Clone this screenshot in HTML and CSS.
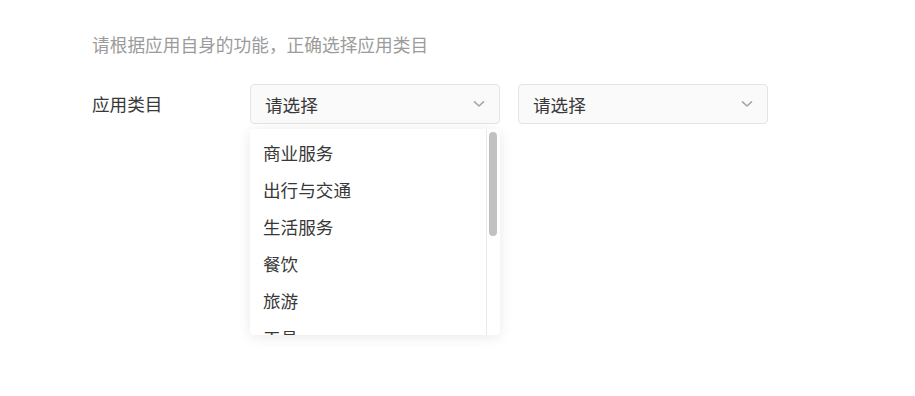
FILE: index.html
```html
<!DOCTYPE html>
<html lang="zh-CN">
  <head>
    <meta charset="UTF-8" />
    <meta name="viewport" content="width=device-width, initial-scale=1.0" />
    <title>应用类目</title>
    <link rel="stylesheet" href="styles.css">
  </head>
  <body>
    <div class="page">
      <p class="hint">请根据应用自身的功能，正确选择应用类目</p>
      <div class="form-row">
        <label class="label">应用类目</label>
        <div class="select-wrap">
          <div class="select">
            <span>请选择</span>
            <svg class="arrow" width="12" height="8" viewBox="0 0 12 8"><path d="M1.5 1.8 6 6 10.5 1.8" fill="none" stroke="#a6a6a6" stroke-width="1.6" stroke-linecap="round" stroke-linejoin="round"/></svg>
          </div>
          <div class="dropdown">
            <ul class="options">
              <li>商业服务</li>
              <li>出行与交通</li>
              <li>生活服务</li>
              <li>餐饮</li>
              <li>旅游</li>
              <li>工具</li>
              <li>教育</li>
              <li>医疗</li>
              <li>金融</li>
              <li>社交</li>
              <li>游戏</li>
            </ul>
            <div class="scrollbar">
              <div class="thumb"></div>
            </div>
          </div>
        </div>
        <div class="select-wrap">
          <div class="select">
            <span>请选择</span>
            <svg class="arrow" width="12" height="8" viewBox="0 0 12 8"><path d="M1.5 1.8 6 6 10.5 1.8" fill="none" stroke="#a6a6a6" stroke-width="1.6" stroke-linecap="round" stroke-linejoin="round"/></svg>
          </div>
        </div>
      </div>
    </div>
  </body>
</html>
```

FILE: styles.css
```css
body {
  margin: 0;
  background: #fff;
  font-family: "Noto Sans CJK SC", "Noto Sans", sans-serif;
  color: #333;
}
.page {
  box-sizing: border-box;
  min-height: 100vh;
  padding: 32px 92px;
}
.hint {
  margin: 0;
  font-size: 17.7px;
  line-height: 24px;
  color: #9b9b9b;
}
.form-row {
  display: flex;
  align-items: center;
  gap: 18px;
  margin-top: 28px;
}
.label {
  width: 140px;
  font-size: 17.6px;
  line-height: 40px;
  color: #383838;
}
.select-wrap {
  position: relative;
}
.select {
  box-sizing: border-box;
  width: 250px;
  height: 40px;
  display: flex;
  align-items: center;
  justify-content: space-between;
  padding: 0 14px;
  border: 1px solid #e4e4e4;
  border-radius: 4px;
  background: #fafafa;
  font-size: 17.6px;
  color: #383838;
}
.dropdown {
  position: absolute;
  top: 45px;
  left: 0;
  width: 250px;
  height: 206px;
  display: flex;
  overflow: hidden;
  background: #fff;
  border-radius: 4px;
  box-shadow: 0 2px 14px rgba(0, 0, 0, 0.09);
}
.options {
  flex: 1;
  margin: 0;
  padding: 5px 0 0;
  list-style: none;
  overflow: hidden;
}
.options li {
  height: 37px;
  line-height: 37px;
  padding-left: 13px;
  font-size: 17.6px;
  color: #383838;
}
.scrollbar {
  width: 14px;
  box-sizing: border-box;
  border-left: 1px solid #e9e9e9;
  padding: 3px 0 0 2px;
}
.thumb {
  width: 8px;
  height: 104px;
  border-radius: 4px;
  background: #c1c1c1;
}
```
